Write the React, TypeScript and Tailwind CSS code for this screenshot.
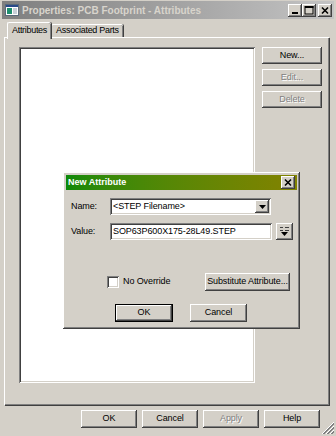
import React from 'react';

const raised =
  'shadow-[inset_-1px_-1px_#404040,inset_1px_1px_#ffffff,inset_-2px_-2px_#808080,inset_2px_2px_#d4d0c8]';
const sunken =
  'shadow-[inset_1px_1px_#808080,inset_-1px_-1px_#ffffff,inset_2px_2px_#404040,inset_-2px_-2px_#d4d0c8]';
const disabledText = 'text-[#808080] [text-shadow:1px_1px_0_#ffffff]';

const Button: React.FC<{ label: string; className?: string; disabled?: boolean; isDefault?: boolean }> = ({
  label,
  className = '',
  disabled,
  isDefault,
}) => (
  <div
    className={`flex items-center justify-center whitespace-nowrap bg-[#d4d0c8] ${
      isDefault ? 'border border-black' : ''
    } ${className}`}
  >
    <div className={`flex h-full w-full items-center justify-center ${raised} ${disabled ? disabledText : 'text-black'}`}>
      {label}
    </div>
  </div>
);

const CaptionButton: React.FC<{ kind: 'min' | 'max' | 'close' }> = ({ kind }) => (
  <div className={`flex h-[13px] w-[14px] items-center justify-center bg-[#d4d0c8] ${raised}`}>
    <svg width="10" height="9" viewBox="0 0 10 9">
      {kind === 'min' && <rect x="2" y="6" width="6" height="2" fill="#000" />}
      {kind === 'max' && (
        <>
          <rect x="1" y="0.5" width="8" height="7.5" fill="none" stroke="#000" strokeWidth="1" />
          <rect x="1" y="0" width="8.5" height="2" fill="#000" />
        </>
      )}
      {kind === 'close' && <path d="M2 1.5 L8 7.5 M8 1.5 L2 7.5" stroke="#000" strokeWidth="1.6" />}
    </svg>
  </div>
);

export default function App() {
  return (
    <div
      className="relative flex h-[436px] w-[336px] flex-col overflow-hidden bg-[#d4d0c8] text-[9px] tracking-[-0.1px] text-black"
      style={{ fontFamily: '"Liberation Sans", Arial, sans-serif' }}
    >
      {/* Title bar */}
      <div className="mx-[2px] mt-[1px] flex h-[18px] items-center bg-gradient-to-r from-[#7f7f7f] to-[#c4c4c4] pl-[3px] pr-[2px]">
        <svg width="14" height="12" viewBox="0 0 14 12" className="mr-[3px]">
          <rect x="0.5" y="0.5" width="13" height="11" fill="#fff" stroke="#5a6a7a" />
          <rect x="1" y="1" width="12" height="2" fill="#2a4a8a" />
          <rect x="2" y="4" width="5" height="6" fill="#1f8f6f" />
          <rect x="8" y="4" width="4" height="6" fill="#c8d0d8" />
        </svg>
        <span className="flex-1 text-[10px] font-bold tracking-normal text-[#d8d4cc]">
          Properties: PCB Footprint - Attributes
        </span>
        <div className="flex items-center">
          <CaptionButton kind="min" />
          <CaptionButton kind="max" />
          <div className="w-[2px]" />
          <CaptionButton kind="close" />
        </div>
      </div>

      {/* Tabs */}
      <div className="mt-[3px] flex items-end pl-[7px] tracking-[-0.3px]">
        <div className="relative z-10 mb-[-2px] flex h-[17px] items-center rounded-t-[2px] border-l border-t border-white bg-[#d4d0c8] px-[4px] shadow-[inset_-1px_0_#808080,1px_0_#404040]">
          Attributes
        </div>
        <div className="flex h-[13px] items-center rounded-t-[2px] border-l border-t border-white px-[4px] shadow-[inset_-1px_0_#808080,1px_0_#404040]">
          Associated Parts
        </div>
      </div>

      {/* Tab panel */}
      <div className="ml-[4px] mr-[7px] flex h-[368px] border-l border-t border-white shadow-[inset_-1px_-1px_#808080,1px_1px_#404040]">
        <div className={`ml-[14px] mt-[9px] h-[336px] w-[236px] bg-white ${sunken}`} />
        <div className="ml-[7px] mt-[9px] flex flex-col gap-[5px]">
          <Button label="New..." className="h-[17px] w-[60px]" />
          <Button label="Edit..." className="h-[17px] w-[60px]" disabled />
          <Button label="Delete" className="h-[17px] w-[60px]" disabled />
        </div>
      </div>

      {/* Bottom buttons */}
      <div className="mt-[5px] flex justify-end gap-[5px] pr-[16px]">
        <Button label="OK" className="h-[18px] w-[56px]" />
        <Button label="Cancel" className="h-[18px] w-[56px]" />
        <Button label="Apply" className="h-[18px] w-[56px]" disabled />
        <Button label="Help" className="h-[18px] w-[56px]" />
      </div>

      {/* Size grip */}
      <svg className="absolute bottom-[2px] right-[2px]" width="12" height="12" viewBox="0 0 12 12">
        {[0, 4, 8].map((o) => (
          <g key={o}>
            <line x1={12} y1={o} x2={o} y2={12} stroke="#ffffff" strokeWidth="1" />
            <line x1={12} y1={o + 1} x2={o + 1} y2={12} stroke="#808080" strokeWidth="1" />
            <line x1={12} y1={o + 2} x2={o + 2} y2={12} stroke="#808080" strokeWidth="1" />
          </g>
        ))}
      </svg>

      {/* New Attribute dialog (overlaid) */}
      <div className={`absolute left-[63px] top-[172px] flex h-[157px] w-[237px] flex-col bg-[#d4d0c8] p-[3px] ${raised}`}>
        <div className="flex h-[15px] items-center bg-gradient-to-r from-[#0a8a0a] to-[#828200] pl-[2px] pr-[2px]">
          <span className="flex-1 font-bold tracking-normal text-white">New Attribute</span>
          <CaptionButton kind="close" />
        </div>

        <div className="mt-[8px] flex items-center">
          <span className="ml-[5px] w-[39px]">Name:</span>
          <div className={`flex h-[17px] w-[161px] items-center bg-white pl-[3px] pr-[2px] ${sunken}`}>
            <span className="flex-1">&lt;STEP Filename&gt;</span>
            <div className={`flex h-[13px] w-[14px] items-center justify-center bg-[#d4d0c8] ${raised}`}>
              <svg width="7" height="4" viewBox="0 0 7 4">
                <path d="M0 0 H7 L3.5 4 Z" fill="#000" />
              </svg>
            </div>
          </div>
        </div>

        <div className="mt-[8px] flex items-center">
          <span className="ml-[5px] w-[39px]">Value:</span>
          <div className={`flex h-[17px] w-[162px] items-center bg-white pl-[3px] ${sunken}`}>
            SOP63P600X175-28L49.STEP
          </div>
          <div className={`ml-[4px] flex h-[17px] w-[17px] flex-col items-center justify-center gap-[1px] bg-[#d4d0c8] ${raised}`}>
            <svg width="9" height="10" viewBox="0 0 9 10">
              <path d="M0 0.5 H3 M5 0.5 H9 M0 3.5 H3 M5 3.5 H9" stroke="#404040" strokeWidth="1" />
              <path d="M1 5 H8 L4.5 9 Z" fill="#000" />
            </svg>
          </div>
        </div>

        <div className="mt-[33px] flex items-center">
          <div className={`ml-[41px] h-[12px] w-[12px] bg-white ${sunken}`} />
          <span className="ml-[4px]">No Override</span>
          <Button label="Substitute Attribute..." className="ml-[auto] mr-[7px] h-[18px] w-[85px]" />
        </div>

        <div className="mt-[13px] flex items-center">
          <Button label="OK" className="ml-[49px] h-[18px] w-[58px]" isDefault />
          <Button label="Cancel" className="ml-[17px] h-[18px] w-[57px]" />
        </div>
      </div>
    </div>
  );
}
